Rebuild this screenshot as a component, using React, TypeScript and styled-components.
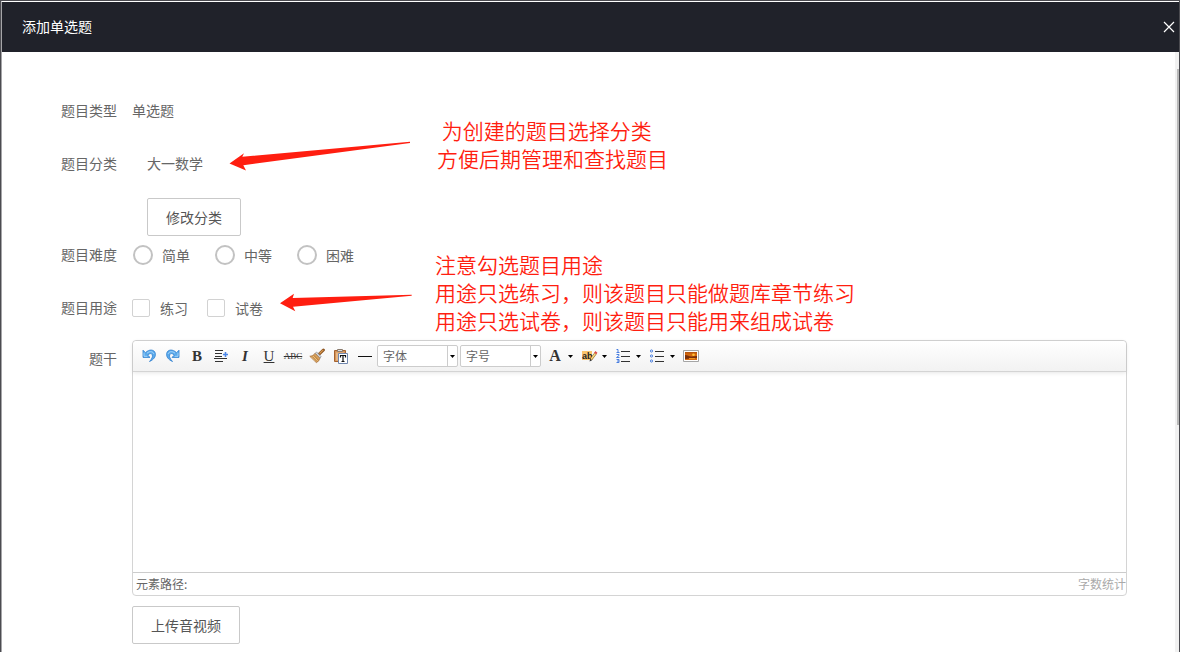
import React from 'react';
import styled, { createGlobalStyle } from 'styled-components';

const GlobalStyle = createGlobalStyle`
  * { box-sizing: border-box; }
  body {
    margin: 0;
    background: #4b4b50;
    color: #666;
    font: 14px/20px "Noto Sans CJK SC", sans-serif;
  }
  button, input, select, textarea { font: inherit; color: inherit; margin: 0; }
`;

const Backdrop = styled.div`
  display: flex;
  min-height: 100vh;
  padding: 1px 1px 0;
`;

const Dialog = styled.section`
  display: flex;
  flex: 1;
  flex-direction: column;
  min-width: 0;
  background: #fff;
  border-top: 1px solid #fff;
  border-left: 1px solid #a5a5a8;
`;

const TitleBar = styled.header`
  display: flex;
  align-items: center;
  justify-content: space-between;
  height: 50px;
  padding: 0 4px 0 20px;
  background: #20222a;
  color: #fff;
`;

const Title = styled.h1`
  margin: 0;
  padding-bottom: 2px;
  font-size: 14px;
  font-weight: 400;
`;

const CloseButton = styled.button`
  display: flex;
  padding: 0;
  border: 0;
  background: none;
  color: #fff;
  cursor: pointer;
`;

const DialogBody = styled.div`
  display: flex;
  flex: 1;
`;

const Form = styled.form`
  position: relative;
  flex: 1;
  min-width: 0;
  padding: 40px 48px 8px 0;
`;

const ScrollTrack = styled.div`
  display: flex;
  flex-direction: column;
  align-items: flex-end;
  width: 4px;
  padding-top: 17px;
  background: #f1f1f1;
`;

const ScrollThumb = styled.div`
  width: 2px;
  height: 61%;
  background: #b9b9b9;
`;

const Row = styled.div<{ $gap?: number }>`
  display: flex;
  margin: 0;
  margin-bottom: ${(p) => p.$gap ?? 15}px;
`;

const Label = styled.div`
  flex: none;
  width: 130px;
  padding: 8px 15px 10px 0;
  text-align: right;
`;

const Value = styled.div`
  height: 38px;
  padding: 8px 0 10px;
`;

const Category = styled.div`
  display: flex;
  flex-direction: column;
  align-items: flex-start;
  gap: 15px;
  padding-left: 15px;
`;

const OutlineButton = styled.button`
  height: 38px;
  padding: 0 18px;
  border: 1px solid #c9c9c9;
  border-radius: 2px;
  background: #fff;
  color: #555;
  white-space: nowrap;
  cursor: pointer;
`;

const Options = styled.div<{ $gap: number }>`
  display: flex;
  align-items: center;
  gap: ${(p) => p.$gap}px;
  height: 38px;
`;

const Option = styled.label`
  display: flex;
  align-items: center;
  cursor: pointer;
`;

const Radio = styled.input`
  appearance: none;
  width: 20px;
  height: 20px;
  border: 2px solid #c2c2c2;
  border-radius: 50%;
  && { margin: 0 9px 0 1px; }
  &:checked { border-color: #5fb878; box-shadow: inset 0 0 0 4px #fff; background: #5fb878; }
`;

const Checkbox = styled.input`
  appearance: none;
  width: 18px;
  height: 18px;
  border: 1px solid #d2d2d2;
  border-radius: 2px;
  && { margin: 0 10px 0 0; }
  &:checked { background: #5fb878; border-color: #5fb878; }
`;

const EditorColumn = styled.div`
  display: flex;
  flex: 1;
  flex-direction: column;
  align-items: flex-start;
  gap: 10px;
  min-width: 0;
`;

const Editor = styled.div`
  width: 100%;
  border: 1px solid #d4d4d4;
  border-radius: 4px;
`;

const Toolbar = styled.div`
  position: relative;
  display: flex;
  align-items: center;
  height: 31px;
  padding: 0 4px;
  border-bottom: 1px solid #d4d4d4;
  border-radius: 4px 4px 0 0;
  background: linear-gradient(#fff, #f2f2f2);
  box-shadow: 0 1px 4px rgba(0, 0, 0, 0.1);
`;

const ToolButton = styled.button`
  display: flex;
  flex: none;
  align-items: center;
  justify-content: center;
  width: 24px;
  height: 20px;
  padding: 0;
  border: 0;
  background: none;
  cursor: pointer;
`;

const ArrowButton = styled(ToolButton)`
  width: 10px;
  padding-right: 3px;
`;

const Glyph = styled.span<{ $size?: number; $weight?: number; $italic?: boolean; $line?: string }>`
  color: #333;
  font-family: "Liberation Serif", serif;
  font-size: ${(p) => p.$size ?? 15}px;
  font-weight: ${(p) => p.$weight ?? 700};
  font-style: ${(p) => (p.$italic ? 'italic' : 'normal')};
  line-height: 16px;
  text-decoration: ${(p) => p.$line ?? 'none'};
  text-decoration-thickness: 1px;
`;

const Combo = styled.div`
  display: grid;
  flex: none;
  width: 81px;
  height: 22px;
  margin-right: 2px;
  border: 1px solid #ccc;
  border-radius: 2px;
  background: #fff;
`;

const ComboSelect = styled.select`
  grid-area: 1 / 1;
  appearance: none;
  padding: 0 10px 0 5px;
  border: 0;
  background: transparent;
  font-size: 12px;
  line-height: 20px;
`;

const ComboArrow = styled.span`
  display: flex;
  grid-area: 1 / 1;
  align-items: center;
  justify-content: center;
  justify-self: end;
  width: 10px;
  border-left: 1px solid #ccc;
  pointer-events: none;
`;

const EditArea = styled.textarea`
  display: block;
  width: 100%;
  height: 200px;
  padding: 10px;
  border: 0;
  outline: 0;
  background: #fff;
  resize: none;
`;

const StatusBar = styled.div`
  display: flex;
  justify-content: space-between;
  height: 23px;
  padding-left: 3px;
  border-top: 1px solid #ccc;
  font-size: 12px;
  line-height: 22px;
`;

const WordCount = styled.span`
  color: #aaa;
`;

const Note = styled.p<{ $left: number; $top: number }>`
  position: absolute;
  left: ${(p) => p.$left}px;
  top: ${(p) => p.$top}px;
  margin: 0;
  color: #ff1e10;
  font-size: 21px;
  font-weight: 350;
  line-height: 28px;
  white-space: pre;
  pointer-events: none;
`;

const Pointer = styled.svg<{ $left: number; $top: number }>`
  position: absolute;
  left: ${(p) => p.$left}px;
  top: ${(p) => p.$top}px;
  fill: #ff1e10;
  pointer-events: none;
`;

const Icon = ({ children }: { children: React.ReactNode }) => (
  <svg width="16" height="16" viewBox="0 0 16 16" fill="none" aria-hidden="true">{children}</svg>
);

const Caret = () => (
  <svg width="5" height="3" viewBox="0 0 5 3" aria-hidden="true"><path d="M0 0h5L2.5 3z" fill="#000" /></svg>
);

const UndoShape = () => (
  <>
    <path d="M2 2.200v7.200h7L6.700 7.100C8.300 5.200 10.600 5 11.300 6.800c.7 2-.6 4.200-2.800 6.700 4.400-1.900 6.500-5 5.800-8.200C13.400 1.500 8.300.7 4.500 4.700z" fill="#5aaaec" stroke="#2f7fcf" strokeWidth=".8" strokeLinejoin="round" />
    <path d="M3 4.600v3.700h3.400M6 5.200C8.700 2.900 12 3.200 12.900 6" stroke="#a9d7fa" strokeWidth=".9" />
  </>
);

const UndoIcon = () => <Icon><UndoShape /></Icon>;
const RedoIcon = () => <Icon><g transform="translate(16 0) scale(-1 1)"><UndoShape /></g></Icon>;

const IndentIcon = () => (
  <Icon>
    <path d="M2 2.500h8M2 5.500h7M2 8.500h7M1 10.500h13M2 13.500h8" stroke="#333" />
    <path d="M12.500 4v5M10 6.500h5" stroke="#4a86e8" strokeWidth="1.600" />
  </Icon>
);

const BroomIcon = () => (
  <Icon>
    <path d="M14.400 2 10.300 6" stroke="#8a5320" strokeWidth="3" strokeLinecap="round" />
    <path d="M14.300 1.900 10.500 5.500" stroke="#d99a52" strokeWidth="1.200" />
    <path d="m7.600 4 4.600 4.800-1.400 1.400L6.100 5.400z" fill="#d5d9df" stroke="#7e8794" strokeWidth=".7" />
    <path d="M6.100 5.400 10.800 10.200c-.4 1.900-1.700 3.700-3.500 4.400L.8 8.300C2.900 8 4.600 7.100 6.100 5.400z" fill="#dca45b" stroke="#9a6230" strokeWidth=".7" />
    <path d="m3 8.500 4.600 4.800M4.900 7.400l4.500 4.700" stroke="#9a6230" strokeWidth=".7" />
    <path d="m2.200 8.700 4.600 4.700M4 7.900l4.600 4.800" stroke="#f5d59a" strokeWidth=".6" />
  </Icon>
);

const PasteIcon = () => (
  <Icon>
    <path d="M1.500 2.500h11v11h-11z" fill="#d39358" stroke="#a5622e" />
    <path d="M3 4.500h8v8H3z" fill="#e8b886" />
    <path d="M4.500 1.500h5v2h-5z" fill="#ddd" stroke="#8a7a6c" />
    <path d="M5.500 5.500h9v10h-9z" fill="#fff" stroke="#6f86ad" />
    <path d="M7.500 9.500v-2h5v2M10 7.500v6M8.500 13.500h3" stroke="#111" strokeWidth="1.200" />
  </Icon>
);

const RuleIcon = () => <Icon><path d="M1 8.500h14" stroke="#111" /></Icon>;

const HighlightIcon = () => (
  <svg width="17" height="16" viewBox="0 0 17 16" fill="none" aria-hidden="true">
    <path d="M1 3h10v9H1z" fill="#fbc56d" />
    <text x="1" y="11" fontFamily="Liberation Sans" fontSize="9" fontWeight="700" fill="#222">ab</text>
    <path d="m14.800 5-4.600 6.200" stroke="#9b6a24" strokeWidth="2.600" />
    <path d="m14.800 5-4.600 6.200" stroke="#f6dc84" strokeWidth="1.400" />
    <path d="m14.200 5.500 1.200-1.600" stroke="#dd4a4a" strokeWidth="2.600" />
    <path d="m8.500 13.500.7-2.700 1.900 1.400z" fill="#333" />
  </svg>
);

const NumberedIcon = () => (
  <Icon>
    <path d="M1.500 1.500H3v3M1.500 4.500h3M1.500 6.500H4v1L1.500 9.500h3M1.500 11.500H4v3H1.500M2 13h2" stroke="#4a7fe0" />
    <path d="M6 3.500h9M6 8.500h9M6 13.500h9" stroke="#333" />
  </Icon>
);

const BulletIcon = () => (
  <Icon>
    <g stroke="#4a7fe0"><circle cx="2.500" cy="3" r="1.100" /><circle cx="2.500" cy="8" r="1.100" /><circle cx="2.500" cy="13" r="1.100" /></g>
    <path d="M6 3.500h9M6 8.500h9M6 13.500h9" stroke="#333" />
  </Icon>
);

const ImageIcon = () => (
  <Icon>
    <path d="M.5 2.500h15v11H.5z" fill="#fff" stroke="#a5a5a5" />
    <path d="M2 4h12v8H2z" fill="#d6690d" />
    <path d="M2 4h12v1.500H2z" fill="#b9560c" />
    <path d="M2 7c3 0 4 1.700 7 1.500s3-.5 5-.5v2L2 11z" fill="#7a2f0a" />
    <circle cx="10.500" cy="6.700" r="1.300" fill="#ffc43c" />
    <path d="M6 10.500h6" stroke="#ef9620" />
  </Icon>
);

const CloseIcon = () => (
  <svg width="12" height="12" viewBox="0 0 12 12" aria-hidden="true">
    <path d="m1 1 10 10M11 1 1 11" stroke="currentColor" strokeWidth="1.200" />
  </svg>
);

const tools: { name: string; icon: React.ReactNode }[] = [
  { name: '撤销', icon: <UndoIcon /> },
  { name: '重做', icon: <RedoIcon /> },
  { name: '加粗', icon: <Glyph>B</Glyph> },
  { name: '首行缩进', icon: <IndentIcon /> },
  { name: '斜体', icon: <Glyph $italic>I</Glyph> },
  { name: '下划线', icon: <Glyph $weight={400} $line="underline">U</Glyph> },
  { name: '删除线', icon: <Glyph $size={9} $weight={400} $line="line-through">ABC</Glyph> },
  { name: '清除格式', icon: <BroomIcon /> },
  { name: '纯文本粘贴', icon: <PasteIcon /> },
  { name: '分隔线', icon: <RuleIcon /> },
];

const menuTools: { name: string; icon: React.ReactNode }[] = [
  { name: '字体颜色', icon: <Glyph $size={16}>A</Glyph> },
  { name: '背景色', icon: <HighlightIcon /> },
  { name: '有序列表', icon: <NumberedIcon /> },
  { name: '无序列表', icon: <BulletIcon /> },
];

const ToolCombo = ({ name }: { name: string }) => (
  <Combo>
    <ComboSelect aria-label={name}><option>{name}</option></ComboSelect>
    <ComboArrow><Caret /></ComboArrow>
  </Combo>
);

export default function App() {
  return (
    <>
      <GlobalStyle />
      <Backdrop>
        <Dialog role="dialog" aria-labelledby="dialog-title">
          <TitleBar>
            <Title id="dialog-title">添加单选题</Title>
            <CloseButton type="button" aria-label="关闭"><CloseIcon /></CloseButton>
          </TitleBar>
          <DialogBody>
            <Form onSubmit={(e) => e.preventDefault()}>
              <Row>
                <Label>题目类型</Label>
                <Value>单选题</Value>
              </Row>
              <Row $gap={0}>
                <Label>题目分类</Label>
                <Category>
                  <Value>大一数学</Value>
                  <OutlineButton type="button">修改分类</OutlineButton>
                </Category>
              </Row>
              <Row role="radiogroup" aria-labelledby="difficulty">
                <Label id="difficulty">题目难度</Label>
                <Options $gap={24}>
                  {['简单', '中等', '困难'].map((text) => (
                    <Option key={text}><Radio type="radio" name="difficulty" />{text}</Option>
                  ))}
                </Options>
              </Row>
              <Row $gap={13} role="group" aria-labelledby="usage">
                <Label id="usage">题目用途</Label>
                <Options $gap={19}>
                  {['练习', '试卷'].map((text) => (
                    <Option key={text}><Checkbox type="checkbox" name="usage" />{text}</Option>
                  ))}
                </Options>
              </Row>
              <Row $gap={0}>
                <Label as="label" htmlFor="stem">题干</Label>
                <EditorColumn>
                  <Editor>
                    <Toolbar role="toolbar" aria-label="编辑工具">
                      {tools.map((t) => (
                        <ToolButton key={t.name} type="button" aria-label={t.name}>{t.icon}</ToolButton>
                      ))}
                      <ToolCombo name="字体" />
                      <ToolCombo name="字号" />
                      {menuTools.map((t) => (
                        <React.Fragment key={t.name}>
                          <ToolButton type="button" aria-label={t.name}>{t.icon}</ToolButton>
                          <ArrowButton type="button" aria-label={`${t.name}选项`}><Caret /></ArrowButton>
                        </React.Fragment>
                      ))}
                      <ToolButton type="button" aria-label="图片"><ImageIcon /></ToolButton>
                    </Toolbar>
                    <EditArea id="stem" />
                    <StatusBar>
                      <span>元素路径:</span>
                      <WordCount>字数统计</WordCount>
                    </StatusBar>
                  </Editor>
                  <OutlineButton type="button">上传音视频</OutlineButton>
                </EditorColumn>
              </Row>
              <Pointer $left={227} $top={88} width="182" height="32" viewBox="0 0 182 32" aria-hidden="true">
                <path d="M.5 23.500 15 13.300l-1.700 3.400L181 1.700V3L14.300 25.300l2.700 5.200z" />
              </Pointer>
              <Pointer $left={277} $top={240} width="134" height="22" viewBox="0 0 134 22" aria-hidden="true">
                <path d="M1 11.300 15 1.700 13.700 6l119-3.300v1L14 14.700l2.300 4.600z" />
              </Pointer>
              <Note $left={435} $top={64}>{' 为创建的题目选择分类\n方便后期管理和查找题目'}</Note>
              <Note $left={433} $top={198}>{'注意勾选题目用途\n用途只选练习，则该题目只能做题库章节练习\n用途只选试卷，则该题目只能用来组成试卷'}</Note>
            </Form>
            <ScrollTrack><ScrollThumb /></ScrollTrack>
          </DialogBody>
        </Dialog>
      </Backdrop>
    </>
  );
}
